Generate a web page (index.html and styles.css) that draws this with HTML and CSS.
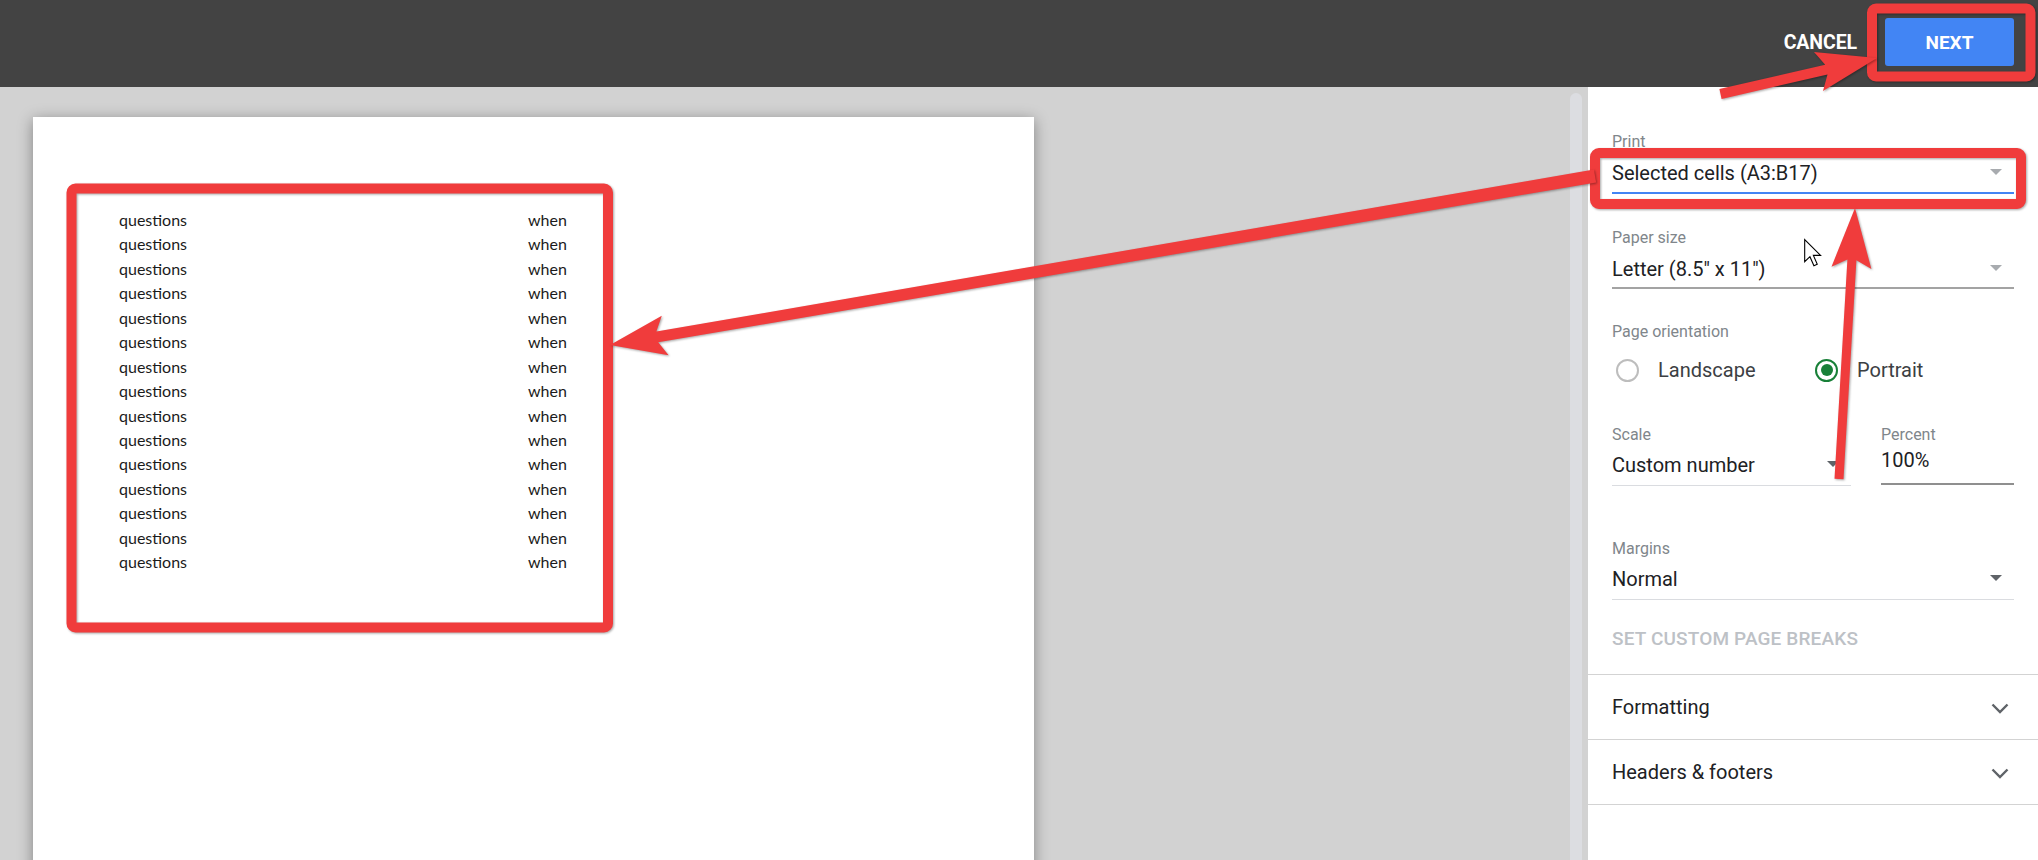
FILE: index.html
```html
<!DOCTYPE html>
<html lang="en">
<head>
<meta charset="utf-8">
<title>Print settings</title>
<link rel="stylesheet" href="styles.css">
</head>
<body>
<div class="app">
  <header class="topbar">
    <span class="btn-cancel">CANCEL</span>
    <span class="btn-next">NEXT</span>
  </header>
  <div class="main">
    <div class="preview">
      <div class="page">
        <div class="sheet">
          <span>questions</span><span>when</span>
          <span>questions</span><span>when</span>
          <span>questions</span><span>when</span>
          <span>questions</span><span>when</span>
          <span>questions</span><span>when</span>
          <span>questions</span><span>when</span>
          <span>questions</span><span>when</span>
          <span>questions</span><span>when</span>
          <span>questions</span><span>when</span>
          <span>questions</span><span>when</span>
          <span>questions</span><span>when</span>
          <span>questions</span><span>when</span>
          <span>questions</span><span>when</span>
          <span>questions</span><span>when</span>
          <span>questions</span><span>when</span>
        </div>
      </div>
    </div>
    <div class="scroll"><div class="thumb"></div></div>
    <aside class="panel">
      <div class="field f-print">
        <div class="label">Print</div>
        <div class="select focused"><span>Selected cells (A3:B17)</span><i class="caret light"></i></div>
      </div>
      <div class="field f-paper">
        <div class="label">Paper size</div>
        <div class="select gray"><span>Letter (8.5" x 11")</span><i class="caret light"></i></div>
      </div>
      <div class="field f-orient">
        <div class="label">Page orientation</div>
        <div class="radios">
          <div class="radio-opt"><span class="radio"></span><span>Landscape</span></div>
          <div class="radio-opt"><span class="radio on"></span><span>Portrait</span></div>
        </div>
      </div>
      <div class="field-row f-scale">
        <div class="field scale">
          <div class="label">Scale</div>
          <div class="select thin"><span>Custom number</span><i class="caret"></i></div>
        </div>
        <div class="field percent">
          <div class="label">Percent</div>
          <div class="input">100%</div>
        </div>
      </div>
      <div class="field f-margins">
        <div class="label">Margins</div>
        <div class="select thin"><span>Normal</span><i class="caret"></i></div>
      </div>
      <div class="link">SET CUSTOM PAGE BREAKS</div>
      <div class="sections">
        <div class="section"><span>Formatting</span>
          <svg class="chev" width="18" height="11" viewBox="0 0 18 11"><path d="M1.5 1.5 L9 9 L16.5 1.5" fill="none" stroke="#5f6368" stroke-width="2.4"/></svg>
        </div>
        <div class="section"><span>Headers &amp; footers</span>
          <svg class="chev" width="18" height="11" viewBox="0 0 18 11"><path d="M1.5 1.5 L9 9 L16.5 1.5" fill="none" stroke="#5f6368" stroke-width="2.4"/></svg>
        </div>
      </div>
    </aside>
  </div>
</div>

<svg class="annot" width="2038" height="860" viewBox="0 0 2038 860">
  <g class="mark" fill="none" stroke="#f03c3c" stroke-width="10">
    <rect x="1872" y="8.5" width="158.5" height="68" rx="4"/>
    <rect x="1595" y="153" width="426" height="51" rx="4"/>
    <rect x="71.5" y="188.5" width="536.5" height="439" rx="4"/>
  </g>
  <g class="mark" fill="#f03c3c">
    <polygon points="1877,58 1814,52 1825.2,64.8 1719.4,89.1 1721.6,98.9 1827.5,74.5 1823,90.9"/>
    <polygon points="610,345 661.8,315.8 656.4,331.5 1593.9,169.6 1596.1,182.4 658.2,342.3 668.6,355.2"/>
    <polygon points="1855,208 1831.5,266.7 1847.4,259.6 1834.5,478.7 1843.5,479.3 1856.4,260.2 1871.4,269.1"/>
  </g>
  <g transform="translate(1804,239) scale(1.38)">
    <path d="M0.5 0.5 L0.5 16.5 L4.3 12.8 L7.2 19.4 L9.6 18.3 L6.8 11.9 L12 11.9 Z" fill="#fff" stroke="#000" stroke-width="0.8" stroke-linejoin="miter"/>
  </g>
</svg>
</body>
</html>
```

FILE: styles.css
```css
* { box-sizing: border-box; }

html, body {
  margin: 0;
  padding: 0;
  width: 2038px;
  height: 860px;
  overflow: hidden;
  font-family: Roboto, "Liberation Sans", Arial, sans-serif;
  background: #ffffff;
}

.app {
  display: flex;
  flex-direction: column;
  width: 2038px;
  height: 860px;
}

/* ---------- top bar ---------- */
.topbar {
  height: 87px;
  flex: none;
  background: #434343;
  display: flex;
  align-items: center;
  justify-content: flex-end;
  padding-right: 24px;
}

.btn-cancel {
  color: #ffffff;
  font-weight: 700;
  font-size: 19.5px;
  letter-spacing: -0.1px;
  margin-right: 28px;
  margin-top: -3px;
}

.btn-next {
  width: 129px;
  height: 48px;
  background: #4285f4;
  color: #ffffff;
  border-radius: 3px;
  font-weight: 700;
  font-size: 19px;
  display: flex;
  align-items: center;
  justify-content: center;
  margin-top: -3px;
}

/* ---------- main ---------- */
.main {
  flex: 1;
  display: flex;
  min-height: 0;
}

.preview {
  width: 1560px;
  flex: none;
  background: #d2d2d2;
  padding: 30px 0 0 33px;
  overflow: hidden;
}

.page {
  width: 1001px;
  height: 1000px;
  background: #ffffff;
  box-shadow: 0 3px 14px rgba(0, 0, 0, 0.38);
  padding: 91px 0 0 86px;
}

.sheet {
  display: grid;
  grid-template-columns: 409px auto;
  font-family: Lato, "Open Sans", sans-serif;
  font-size: 16px;
  line-height: 24.43px;
  color: #1b1b1b;
  width: 460px;
}

.scroll {
  width: 28px;
  flex: none;
  background: #d2d2d2;
  padding: 6px 0 0 10px;
}

.thumb {
  width: 12px;
  height: 100%;
  background: #dcdde1;
  border-radius: 6px 6px 0 0;
}

/* ---------- settings panel ---------- */
.panel {
  width: 450px;
  flex: none;
  background: #ffffff;
  padding: 45px 24px 0 24px;
  display: flex;
  flex-direction: column;
}

.field {
  display: flex;
  flex-direction: column;
}

.label {
  font-size: 16px;
  line-height: 20px;
  height: 20px;
  color: #80868b;
}

.select {
  margin-top: 7px;
  height: 39px;
  padding-bottom: 6px;
  display: flex;
  align-items: center;
  justify-content: space-between;
  font-size: 20px;
  line-height: 28px;
  color: #202124;
  border-bottom: 1px solid #dadce0;
}

.select span { height: 28px; }

.select.focused {
  height: 35px;
  padding-bottom: 5px;
  border-bottom: 2px solid #4285f4;
}

.select.gray {
  height: 34px;
  padding-bottom: 4px;
  border-bottom: 2px solid #a3a3a3;
}

.select.thin {
  margin-top: 6px;
  height: 35px;
  padding-bottom: 6px;
}

.caret {
  width: 0;
  height: 0;
  border-left: 6.5px solid transparent;
  border-right: 6.5px solid transparent;
  border-top: 6.5px solid #5f6368;
  margin-right: 12px;
  margin-top: -2px;
}

.caret.light { border-top-color: #a8abaf; }

.f-paper { margin-top: 34px; }
.f-orient { margin-top: 33px; }
.f-scale { margin-top: 41px; }
.f-margins { margin-top: 53px; }

.radios {
  margin-top: 14px;
  height: 28px;
  display: flex;
  align-items: center;
  padding-left: 4px;
  font-size: 20px;
  line-height: 28px;
  color: #3c4043;
}

.radio-opt {
  display: flex;
  align-items: center;
  gap: 19px;
  width: 201px;
}

.radio {
  width: 23px;
  height: 23px;
  border-radius: 50%;
  border: 2px solid #bdbdbd;
  display: flex;
  align-items: center;
  justify-content: center;
  flex: none;
}

.radio.on { border: 2.5px solid #188038; }

.radio.on::after {
  content: "";
  width: 12px;
  height: 12px;
  border-radius: 50%;
  background: #188038;
}

.field-row {
  display: flex;
  gap: 30px;
}

.scale { width: 239px; }
.percent { width: 133px; }

.input {
  margin-top: 1px;
  height: 39px;
  padding-bottom: 9px;
  font-size: 20px;
  line-height: 28px;
  color: #202124;
  border-bottom: 2px solid #8f8f8f;
}

.link {
  margin-top: 29px;
  font-size: 19px;
  font-weight: 500;
  line-height: 20px;
  color: #bdc1c6;
  letter-spacing: 0.15px;
}

.sections {
  margin: 25px -24px 0 -24px;
  border-bottom: 1px solid #d3d3d3;
}

.section {
  height: 65px;
  border-top: 1px solid #d3d3d3;
  display: flex;
  align-items: center;
  justify-content: space-between;
  padding: 0 29px 0 24px;
  font-size: 20px;
  color: #202124;
}

.chev { display: block; margin-top: 2px; }

/* ---------- annotation overlay ---------- */
.annot {
  position: absolute;
  left: 0;
  top: 0;
  pointer-events: none;
}

.mark {
  filter: drop-shadow(1px 1px 0.8px rgba(0, 0, 0, 0.35));
}
```
